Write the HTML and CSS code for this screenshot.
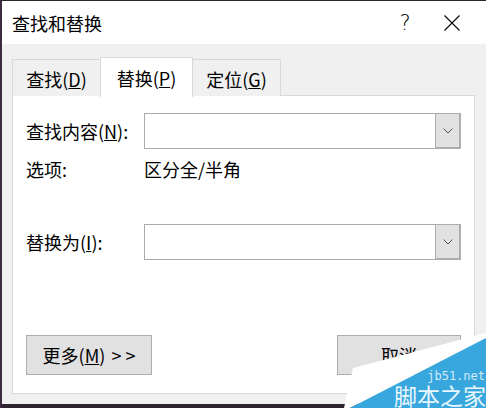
FILE: index.html
```html
<!DOCTYPE html>
<html lang="zh-CN">

<head>
    <meta charset="utf-8">
    <meta name="viewport" content="width=device-width, initial-scale=1.0">
    <title>查找和替换</title>
    <link rel="stylesheet" href="styles.css">
</head>

<body>
    <div class="window">
        <!-- titellinje -->
        <div class="titlebar">
            <span class="title">查找和替换</span>
            <span class="title-btn help">?</span>
            <span class="title-btn">
                <svg width="16" height="16" viewBox="0 0 16 16">
                    <path d="M0.5 0.5 L15.5 15.5 M15.5 0.5 L0.5 15.5" stroke="#000" stroke-width="1.1" fill="none" />
                </svg>
            </span>
        </div>

        <div class="content">
            <div class="tabs">
                <div class="tab">查找(<u>D</u>)</div>
                <div class="tab active">替换(<u>P</u>)</div>
                <div class="tab">定位(<u>G</u>)</div>
            </div>

            <div class="panel">
                <div class="row">
                    <span class="label">查找内容(<u>N</u>):</span>
                    <div class="combo">
                        <span class="combo-input"></span>
                        <span class="combo-btn">
                            <svg width="10" height="6" viewBox="0 0 10 6">
                                <path d="M0.5 0.5 L5 5 L9.5 0.5" stroke="#555" stroke-width="1" fill="none" />
                            </svg>
                        </span>
                    </div>
                </div>

                <div class="row options">
                    <span class="label">选项:</span>
                    <span>区分全/半角</span>
                </div>

                <div class="row replace">
                    <span class="label">替换为(<u>I</u>):</span>
                    <div class="combo">
                        <span class="combo-input"></span>
                        <span class="combo-btn">
                            <svg width="10" height="6" viewBox="0 0 10 6">
                                <path d="M0.5 0.5 L5 5 L9.5 0.5" stroke="#555" stroke-width="1" fill="none" />
                            </svg>
                        </span>
                    </div>
                </div>

                <div class="buttons">
                    <button class="btn more">更多(<u>M</u>) <span class="arrows">&gt; &gt;</span></button>
                    <button class="btn cancel">取消</button>
                </div>
            </div>
        </div>

        <div class="bottom-edge"></div>

        <!-- hjørne-stempel -->
        <div class="stamp">
            <svg width="150" height="80" viewBox="0 0 150 80">
                <polygon points="17,40 150,5 150,10 14,80 8,80" fill="#fff" />
                <polygon points="150,10 150,80 14,80" fill="#38a7dd" />
                <text x="149" y="52" text-anchor="end" class="stamp-url">jb51.net</text>
                <text x="150" y="77" text-anchor="end" class="stamp-name">脚本之家</text>
            </svg>
        </div>
    </div>
</body>

</html>
```

FILE: styles.css
```css
* {
    box-sizing: border-box;
}

body {
    margin: 0;
    padding: 0;
    background-color: #f0f0f0;
    font-family: "Noto Sans CJK SC", "Noto Sans", sans-serif;
    font-size: 18px;
    color: #000;
}

.window {
    position: relative;
    width: 486px;
    height: 408px;
    border-left: 2px solid #3c2a3e;
    border-top: 1px solid #2e2431;
    display: flex;
    flex-direction: column;
    overflow: hidden;
}

.titlebar {
    height: 43px;
    background-color: #fff;
    display: flex;
    align-items: center;
    padding-left: 10px;
    padding-right: 11px;
}

.title {
    flex: 1;
    line-height: 24px;
}

.title-btn {
    width: 46px;
    height: 43px;
    display: flex;
    align-items: center;
    justify-content: center;
}

.help {
    font-family: "DejaVu Sans", sans-serif;
    font-weight: 200;
    font-size: 21px;
    padding-right: 2px;
}

.content {
    flex: 1;
    background-color: #f0f0f0;
    padding: 13px 11px 0 10px;
}

.tabs {
    height: 39px;
    display: flex;
    align-items: flex-end;
    position: relative;
    z-index: 1;
}

.tab {
    width: 89px;
    height: 37px;
    border: 1px solid #d9d9d9;
    border-bottom: none;
    background-color: #f0f0f0;
    display: flex;
    align-items: center;
    justify-content: center;
    line-height: 24px;
    padding-top: 2px;
}

.tab + .tab {
    margin-left: -1px;
}

.tab.active {
    width: 93px;
    height: 40px;
    background-color: #fff;
    margin-bottom: -1px;
    padding-top: 0;
}

.panel {
    margin-top: -1px;
    width: 463px;
    height: 299px;
    border: 1px solid #d9d9d9;
    background-color: #fff;
    padding: 17px 13px 0 13px;
}

.row {
    display: flex;
    align-items: center;
    line-height: 24px;
}

.label {
    width: 118px;
    flex-shrink: 0;
}

.combo {
    width: 317px;
    height: 36px;
    border: 1px solid #ababab;
    display: flex;
}

.combo-input {
    flex: 1;
}

.combo-btn {
    width: 26px;
    margin: -1px -1px -1px 0;
    background-color: #e1e1e1;
    border: 1px solid #adadad;
    border-right-width: 2px;
    border-bottom-width: 2px;
    display: flex;
    align-items: center;
    justify-content: center;
}

.options {
    margin-top: 8px;
    height: 24px;
}

.replace {
    margin-top: 43px;
}

.buttons {
    margin-top: 75px;
    display: flex;
    justify-content: space-between;
}

.btn {
    height: 40px;
    background-color: #e1e1e1;
    border: 1px solid #adadad;
    font-family: "Noto Sans CJK SC", "Noto Sans", sans-serif;
    font-size: 18px;
    color: #000;
    padding: 0;
    line-height: 24px;
}

.btn .arrows {
    margin-left: 2px;
}

.btn.more {
    width: 126px;
}

.btn.cancel {
    width: 124px;
}

.bottom-edge {
    height: 4px;
    margin-top: 10px;
    margin-left: -2px;
    background-color: #2c2430;
}

.stamp {
    position: absolute;
    right: 0;
    bottom: 0;
    width: 150px;
    height: 80px;
}

.stamp svg {
    display: block;
}

.stamp-url {
    font-family: "DejaVu Sans Mono", monospace;
    font-size: 12px;
    fill: #d4ecf8;
}

.stamp-name {
    font-family: "Noto Sans CJK SC", sans-serif;
    font-size: 23px;
    fill: #eaf7fd;
}
```
